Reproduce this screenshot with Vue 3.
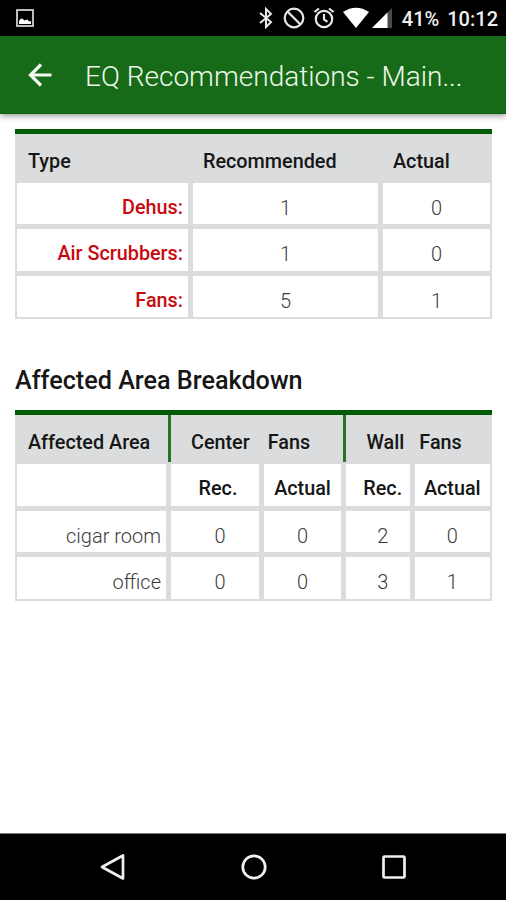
<script setup>
import { ref } from "vue";

const title = ref("EQ Recommendations - Main...");
const battery = ref("41%");
const time = ref("10:12");

const equipment = ref([
  { type: "Dehus", recommended: 1, actual: 0 },
  { type: "Air Scrubbers", recommended: 1, actual: 0 },
  { type: "Fans", recommended: 5, actual: 1 },
]);

const areas = ref([
  { name: "cigar room", centerRec: 0, centerActual: 0, wallRec: 2, wallActual: 0 },
  { name: "office", centerRec: 0, centerActual: 0, wallRec: 3, wallActual: 1 },
]);
</script>

<template>
  <div class="screen">
    <div class="status-bar">
      <svg class="picture" width="18" height="18" viewBox="0 0 18 18">
        <rect x="1" y="1" width="16" height="16" fill="none" stroke="#d0d0d0" stroke-width="1.8" />
        <path d="M3 15v-3l2-2.500 2 .5 1.500 1.500 3-1 1.500 2 2-.5v3z" fill="#fff" />
      </svg>
      <div class="status-icons">
        <svg width="14" height="22" viewBox="0 0 14 22" fill="none" stroke="#e8e8e8" stroke-width="2">
          <path d="M1 6l11 9-5 5V2l5 5-11 9" />
        </svg>
        <svg class="blocked" width="22" height="22" viewBox="0 0 22 22" fill="none" stroke="#e8e8e8" stroke-width="2.2">
          <circle cx="11" cy="11" r="9.3" />
          <path d="M4.500 4.500l13 13" />
        </svg>
        <svg class="alarm" width="22" height="22" viewBox="0 0 22 22" fill="none" stroke="#e8e8e8" stroke-width="2.2">
          <circle cx="11" cy="12" r="8.2" />
          <path d="M11 7v5.500l3.500 2.300M1.500 5L6 1.500M20.500 5L16 1.500" />
        </svg>
        <svg class="wifi" width="28" height="22" viewBox="0 0 28 22">
          <path d="M1 5Q14-3.500 27 5L14 21z" fill="#fff" />
        </svg>
        <svg class="signal" width="20" height="20" viewBox="0 0 20 20">
          <path d="M0 20L20 0v20z" fill="#4a4a4a" />
          <path d="M0 20L15.500 4.500V20z" fill="#fff" />
        </svg>
        <span class="battery">{{ battery }}</span>
        <span class="time">{{ time }}</span>
      </div>
    </div>

    <header class="app-bar">
      <svg width="24" height="24" viewBox="0 0 24 24" fill="none" stroke="#f4faf2" stroke-width="3.2">
        <path d="M23.500 12H3M13 1.500L2.500 12 13 22.500" />
      </svg>
      <h1>{{ title }}</h1>
    </header>

    <main>
      <div class="table types">
        <div class="head">
          <span>Type</span>
          <span>Recommended</span>
          <span>Actual</span>
        </div>
        <div v-for="row in equipment" :key="row.type" class="row">
          <div class="cell name red">{{ row.type }}:</div>
          <div class="cell">{{ row.recommended }}</div>
          <div class="cell">{{ row.actual }}</div>
        </div>
      </div>

      <h2>Affected Area Breakdown</h2>

      <div class="table areas">
        <div class="head">
          <span>Affected Area</span>
          <span class="group center"><b>Center</b><b>Fans</b></span>
          <span class="group wall"><b>Wall</b><b>Fans</b></span>
        </div>
        <div class="row sub">
          <div class="cell"></div>
          <div class="cell rec">Rec.</div>
          <div class="cell">Actual</div>
          <div class="cell rec wall-rec">Rec.</div>
          <div class="cell">Actual</div>
        </div>
        <div v-for="area in areas" :key="area.name" class="row">
          <div class="cell name">{{ area.name }}</div>
          <div class="cell rec value">{{ area.centerRec }}</div>
          <div class="cell">{{ area.centerActual }}</div>
          <div class="cell rec wall-rec">{{ area.wallRec }}</div>
          <div class="cell">{{ area.wallActual }}</div>
        </div>
      </div>
    </main>

    <nav class="nav-bar">
      <svg width="28" height="28" viewBox="0 0 28 28"><path d="M3 14L24 2.500v23z" /></svg>
      <svg width="28" height="28" viewBox="0 0 28 28"><circle cx="14" cy="14" r="11.2" /></svg>
      <svg width="28" height="28" viewBox="0 0 28 28"><rect x="3.5" y="3.5" width="21" height="21" rx="1" /></svg>
    </nav>
  </div>
</template>

<style>
body {
  margin: 0;
  background: #fff;
}
</style>

<style scoped>
.screen {
  width: 506px;
  height: 900px;
  display: flex;
  flex-direction: column;
  overflow: hidden;
  background: #fff;
  font-family: Roboto, "Liberation Sans", sans-serif;
  color: #161616;
}
.status-bar {
  height: 36px;
  flex: none;
  display: flex;
  align-items: center;
  justify-content: space-between;
  background: #000;
  color: #eee;
  padding: 0 8px 0 16px;
}
.status-icons {
  display: flex;
  align-items: center;
  font-size: 20px;
  font-weight: 500;
  line-height: 24px;
  white-space: nowrap;
}
.battery,
.time {
  padding-top: 2px;
}
.blocked { margin-left: 10px; }
.alarm { margin-left: 8px; }
.wifi { margin-left: 7px; }
.signal { margin-left: 2px; }
.battery { margin-left: 10px; }
.time { margin-left: 8px; }
.app-bar {
  height: 78px;
  flex: none;
  display: flex;
  align-items: center;
  box-sizing: border-box;
  padding-left: 28px;
  background: #176a18;
  border-bottom: 1px solid #0b5e0d;
  box-shadow: 0 2px 6px rgba(0, 0, 0, 0.4);
}
h1 {
  margin: 4px 0 0 33px;
  font-size: 28px;
  font-weight: 300;
  color: #eef8ea;
  white-space: nowrap;
}
main {
  flex: 1;
  padding: 14.5px 14px 0 15px;
}
.table {
  background: #dadcdd;
  border-top: 5px solid #005c04;
  padding: 0 2px 2px;
}
.head {
  height: 49px;
  display: grid;
  font-size: 19.8px;
  font-weight: 500;
  line-height: 55px;
  white-space: nowrap;
}
.head > span:first-child { padding-left: 11px; }
.row {
  display: grid;
  column-gap: 5px;
  height: 41.5px;
}
.row + .row { margin-top: 5px; }
.types .head { grid-template-columns: 186px 190px 1fr; }
.types .row { grid-template-columns: 171px 185px 1fr; }
.cell {
  box-sizing: border-box;
  padding-top: 9px;
  background: #fff;
  font-size: 20px;
  font-weight: 300;
  line-height: 32px;
  text-align: center;
  color: #3c3c3c;
  white-space: nowrap;
}
.cell.name {
  text-align: right;
  padding-right: 5px;
}
.cell.red {
  color: #c80a10;
  font-size: 19.8px;
  font-weight: 500;
}
h2 {
  margin: 46px 0 14px;
  padding-top: 1px;
  font-size: 25.2px;
  font-weight: 500;
  line-height: 30px;
}
.areas .head { grid-template-columns: 151px 174.5px 1fr; }
.areas .row { grid-template-columns: 149px 88px 77px 63.5px 1fr; }
.group {
  display: flex;
  height: 47px;
  border-left: 3px solid #247426;
}
.group b { font-weight: 500; }
.center { gap: 18px; padding-left: 20px; }
.wall { gap: 15px; padding-left: 21px; }
.sub .cell {
  font-size: 19.8px;
  font-weight: 500;
  color: #161616;
}
.cell.rec { padding-left: 6px; }
.cell.value { padding-left: 10px; }
.cell.wall-rec { padding-left: 10px; }
.nav-bar {
  height: 67px;
  flex: none;
  display: flex;
  justify-content: center;
  align-items: center;
  gap: 112.5px;
  background: #000;
  border-top: 1px solid #777;
  box-sizing: border-box;
  padding-left: 1px;
}
.nav-bar svg {
  fill: none;
  stroke: #f0f0f0;
  stroke-width: 2.7;
  stroke-linejoin: round;
}
</style>
